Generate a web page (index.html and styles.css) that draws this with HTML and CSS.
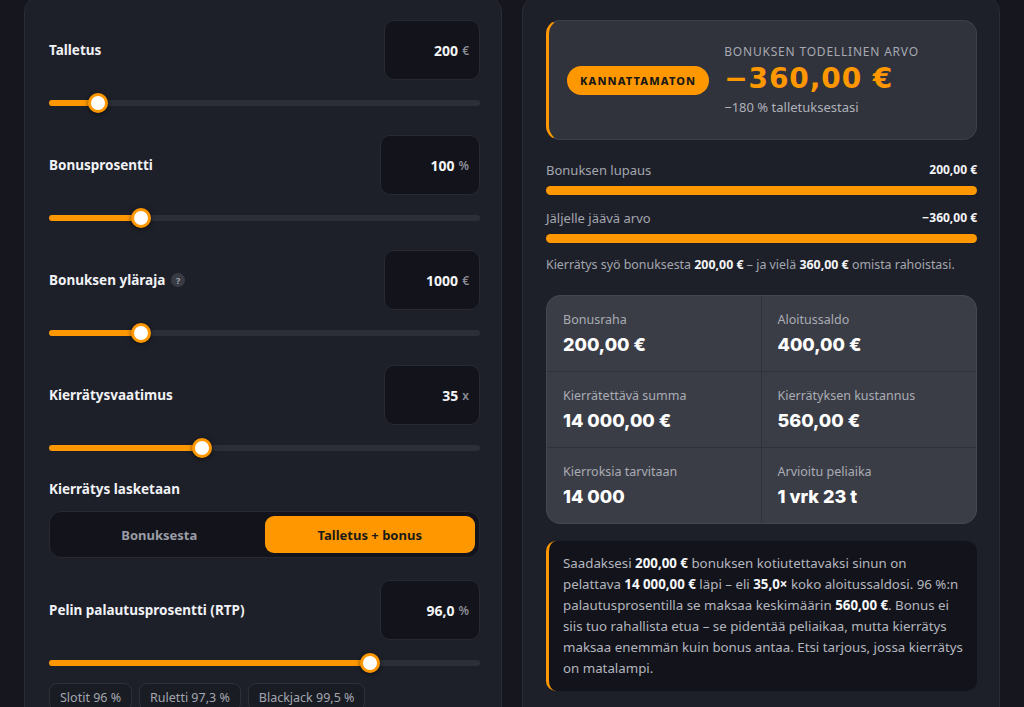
FILE: index.html
```html
<!DOCTYPE html>
<html lang="fi">
<head>
<meta charset="utf-8">
<title>Bonuslaskuri</title>
<link rel="stylesheet" href="styles.css">
</head>
<body>
<main class="page">
  <section class="panel controls">
    <div class="field">
      <div class="field-head">
        <span class="field-label">Talletus</span>
        <div class="num-box"><span class="num-value">200</span><span class="num-unit">€</span></div>
      </div>
      <div class="slider" style="--p:11.3%"><div class="slider-track"><div class="slider-fill"></div></div><div class="slider-thumb"></div></div>
    </div>

    <div class="field">
      <div class="field-head">
        <span class="field-label">Bonusprosentti</span>
        <div class="num-box"><span class="num-value">100</span><span class="num-unit">%</span></div>
      </div>
      <div class="slider" style="--p:21.3%"><div class="slider-track"><div class="slider-fill"></div></div><div class="slider-thumb"></div></div>
    </div>

    <div class="field">
      <div class="field-head">
        <span class="field-label">Bonuksen yläraja <span class="help">?</span></span>
        <div class="num-box"><span class="num-value">1000</span><span class="num-unit">€</span></div>
      </div>
      <div class="slider" style="--p:21.3%"><div class="slider-track"><div class="slider-fill"></div></div><div class="slider-thumb"></div></div>
    </div>

    <div class="field">
      <div class="field-head">
        <span class="field-label">Kierrätysvaatimus</span>
        <div class="num-box"><span class="num-value">35</span><span class="num-unit">x</span></div>
      </div>
      <div class="slider" style="--p:35.6%"><div class="slider-track"><div class="slider-fill"></div></div><div class="slider-thumb"></div></div>
    </div>

    <div class="field">
      <span class="field-label block">Kierrätys lasketaan</span>
      <div class="segmented">
        <button class="seg">Bonuksesta</button>
        <button class="seg active">Talletus + bonus</button>
      </div>
    </div>

    <div class="field">
      <div class="field-head">
        <span class="field-label">Pelin palautusprosentti (RTP)</span>
        <div class="num-box"><span class="num-value">96,0</span><span class="num-unit">%</span></div>
      </div>
      <div class="slider" style="--p:74.5%"><div class="slider-track"><div class="slider-fill"></div></div><div class="slider-thumb"></div></div>
      <div class="presets">
        <button class="chip">Slotit 96 %</button>
        <button class="chip">Ruletti 97,3 %</button>
        <button class="chip">Blackjack 99,5 %</button>
      </div>
    </div>
  </section>

  <section class="panel results">
    <div class="verdict">
      <span class="badge">KANNATTAMATON</span>
      <div class="verdict-text">
        <div class="verdict-label">Bonuksen todellinen arvo</div>
        <div class="verdict-value">−360,00 €</div>
        <div class="verdict-sub">−180 % talletuksestasi</div>
      </div>
    </div>

    <div class="compare">
      <div class="compare-row">
        <div class="compare-head"><span>Bonuksen lupaus</span><strong>200,00 €</strong></div>
        <div class="bar"></div>
      </div>
      <div class="compare-row">
        <div class="compare-head"><span>Jäljelle jäävä arvo</span><strong>−360,00 €</strong></div>
        <div class="bar"></div>
      </div>
      <p class="compare-note">Kierrätys syö bonuksesta <strong>200,00 €</strong> – ja vielä <strong>360,00 €</strong> omista rahoistasi.</p>
    </div>

    <div class="stats">
      <div class="stat"><div class="stat-label">Bonusraha</div><div class="stat-value">200,00 €</div></div>
      <div class="stat"><div class="stat-label">Aloitussaldo</div><div class="stat-value">400,00 €</div></div>
      <div class="stat"><div class="stat-label">Kierrätettävä summa</div><div class="stat-value">14 000,00 €</div></div>
      <div class="stat"><div class="stat-label">Kierrätyksen kustannus</div><div class="stat-value">560,00 €</div></div>
      <div class="stat"><div class="stat-label">Kierroksia tarvitaan</div><div class="stat-value">14 000</div></div>
      <div class="stat"><div class="stat-label">Arvioitu peliaika</div><div class="stat-value">1 vrk 23 t</div></div>
    </div>

    <p class="note">Saadaksesi <strong>200,00 €</strong> bonuksen kotiutettavaksi sinun on pelattava <strong>14 000,00 €</strong> läpi – eli <strong>35,0×</strong> koko aloitussaldosi. 96&nbsp;%:n palautusprosentilla se maksaa keskimäärin <strong>560,00 €</strong>. Bonus ei siis tuo rahallista etua – se pidentää peliaikaa, mutta kierrätys maksaa enemmän kuin bonus antaa. Etsi tarjous, jossa kierrätys on matalampi.</p>
  </section>
</main>
</body>
</html>
```

FILE: styles.css
```css
* { box-sizing: border-box; }

html, body {
  margin: 0;
  background: #16171e;
  color: #eff0f3;
  font-family: "Noto Sans", "Open Sans", Arial, sans-serif;
  overflow: hidden;
}

.page {
  width: 976px;
  margin: -4px auto 0;
  display: grid;
  grid-template-columns: 1fr 1fr;
  gap: 20px;
  align-items: start;
}

.panel {
  background: #1e2029;
  border: 1px solid #2a2c35;
  border-radius: 16px;
  min-height: 760px;
}

.controls { padding: 23px 21px 23px 24px; }
.results { padding: 23px 22px 23px 23px; }

/* ---- input fields ---- */
.field { margin-bottom: 22px; }

.field-head {
  display: flex;
  align-items: center;
  justify-content: space-between;
  height: 60px;
}

.field-label {
  font-size: 13.5px;
  font-weight: 700;
  color: #f1f2f5;
  display: inline-flex;
  align-items: center;
}
.field-label.block { display: block; line-height: 18px; }

.help {
  display: inline-flex;
  align-items: center;
  justify-content: center;
  width: 14px;
  height: 14px;
  margin-left: 6px;
  border-radius: 50%;
  background: #383b44;
  color: #a0a3ac;
  font-size: 9px;
  font-weight: 700;
}

.num-box {
  height: 60px;
  display: flex;
  align-items: center;
  justify-content: flex-end;
  gap: 4px;
  padding: 0 10px;
  background: #13141b;
  border: 1px solid #282a33;
  border-radius: 10px;
}
.num-value {
  width: 63px;
  text-align: right;
  font-size: 14px;
  font-weight: 700;
  color: #f4f5f7;
}
.num-unit {
  font-size: 12px;
  font-weight: 600;
  color: #8b8e98;
}

/* ---- sliders ---- */
.slider {
  position: relative;
  height: 20px;
  margin-top: 13px;
  display: flex;
  align-items: center;
}
.slider-track {
  flex: 1;
  height: 6px;
  border-radius: 3px;
  background: #2d2f38;
  overflow: hidden;
}
.slider-fill {
  width: var(--p);
  height: 100%;
  background: #ff9800;
}
.slider-thumb {
  position: absolute;
  top: 0;
  left: var(--p);
  width: 20px;
  height: 20px;
  margin-left: -10px;
  border-radius: 50%;
  background: #ffffff;
  border: 3.5px solid #ff9800;
  box-shadow: 0 1px 5px rgba(0, 0, 0, 0.55);
}

/* ---- segmented switch ---- */
.segmented {
  margin-top: 13px;
  display: grid;
  grid-template-columns: 1fr 1fr;
  padding: 4px;
  background: #13141b;
  border: 1px solid #282a33;
  border-radius: 12px;
}
.seg {
  height: 37px;
  border: 0;
  border-radius: 9px;
  background: transparent;
  color: #9a9da6;
  font-family: inherit;
  font-size: 13px;
  font-weight: 700;
}
.seg.active {
  background: #ff9800;
  color: #1b1a18;
}

/* ---- RTP presets ---- */
.presets {
  display: flex;
  gap: 7px;
  margin-top: 10px;
}
.chip {
  height: 28px;
  padding: 0 10px;
  background: #1a1c24;
  border: 1px solid #2e3039;
  border-radius: 8px;
  color: #a3a6af;
  font-family: inherit;
  font-size: 12.5px;
}

/* ---- verdict card ---- */
.verdict {
  display: flex;
  align-items: center;
  gap: 17px;
  padding: 23px 20px 23px 18px;
  background: #31333c;
  border: 1px solid #3d4049;
  border-left: 3px solid #ff9800;
  border-radius: 14px;
}
.badge {
  height: 29px;
  line-height: 29px;
  padding: 0 13px;
  border-radius: 15px;
  background: #ff9800;
  color: #1c1a17;
  font-size: 11px;
  font-weight: 800;
  letter-spacing: 1.1px;
}
.verdict-text { margin-left: -2px; }
.verdict-label {
  font-size: 12px;
  line-height: 16px;
  text-transform: uppercase;
  letter-spacing: 0.8px;
  color: #a6a9b2;
}
.verdict-value {
  font-family: "DejaVu Sans", "Noto Sans", sans-serif;
  font-size: 28px;
  line-height: 38px;
  font-weight: 700;
  letter-spacing: 0.9px;
  color: #ff9800;
}
.verdict-sub {
  font-size: 13px;
  line-height: 18px;
  color: #aeb1b9;
}

/* ---- promise vs remaining ---- */
.compare { margin-top: 21px; }
.compare-row + .compare-row { margin-top: 14px; }
.compare-head {
  display: flex;
  justify-content: space-between;
  align-items: center;
  line-height: 18px;
  font-size: 13px;
  color: #a3a6af;
}
.compare-head strong {
  font-size: 12px;
  color: #f3f4f6;
}
.bar {
  height: 9px;
  margin-top: 7px;
  border-radius: 5px;
  background: #ff9800;
}
.compare-note {
  margin: 13px 0 0;
  font-size: 12.4px;
  line-height: 18px;
  color: #a3a6af;
}
.compare-note strong { color: #f3f4f6; }

/* ---- stats grid ---- */
.stats {
  margin-top: 21px;
  display: grid;
  grid-template-columns: 1fr 1fr;
  background: #3b3d46;
  border: 1px solid #454851;
  border-radius: 14px;
  overflow: hidden;
}
.stat {
  padding: 16px 16px 14px;
  border-bottom: 1px solid #30323a;
}
.stat:nth-child(odd) { border-right: 1px solid #30323a; }
.stat:nth-last-child(-n+2) { border-bottom: 0; }
.stat-label {
  font-size: 12.5px;
  line-height: 16px;
  color: #a9acb4;
}
.stat-value {
  margin-top: 5px;
  font-family: Inter, "Noto Sans", sans-serif;
  font-size: 18px;
  line-height: 24px;
  font-weight: 800;
  color: #ffffff;
}

/* ---- explanation ---- */
.note {
  margin: 17px 0 0;
  padding: 12px 14px 12px 14px;
  background: #13141b;
  border-left: 3px solid #ff9800;
  border-radius: 10px;
  font-size: 13.3px;
  line-height: 21px;
  color: #b3b6be;
}
.note strong { color: #f6f7f9; }
```
